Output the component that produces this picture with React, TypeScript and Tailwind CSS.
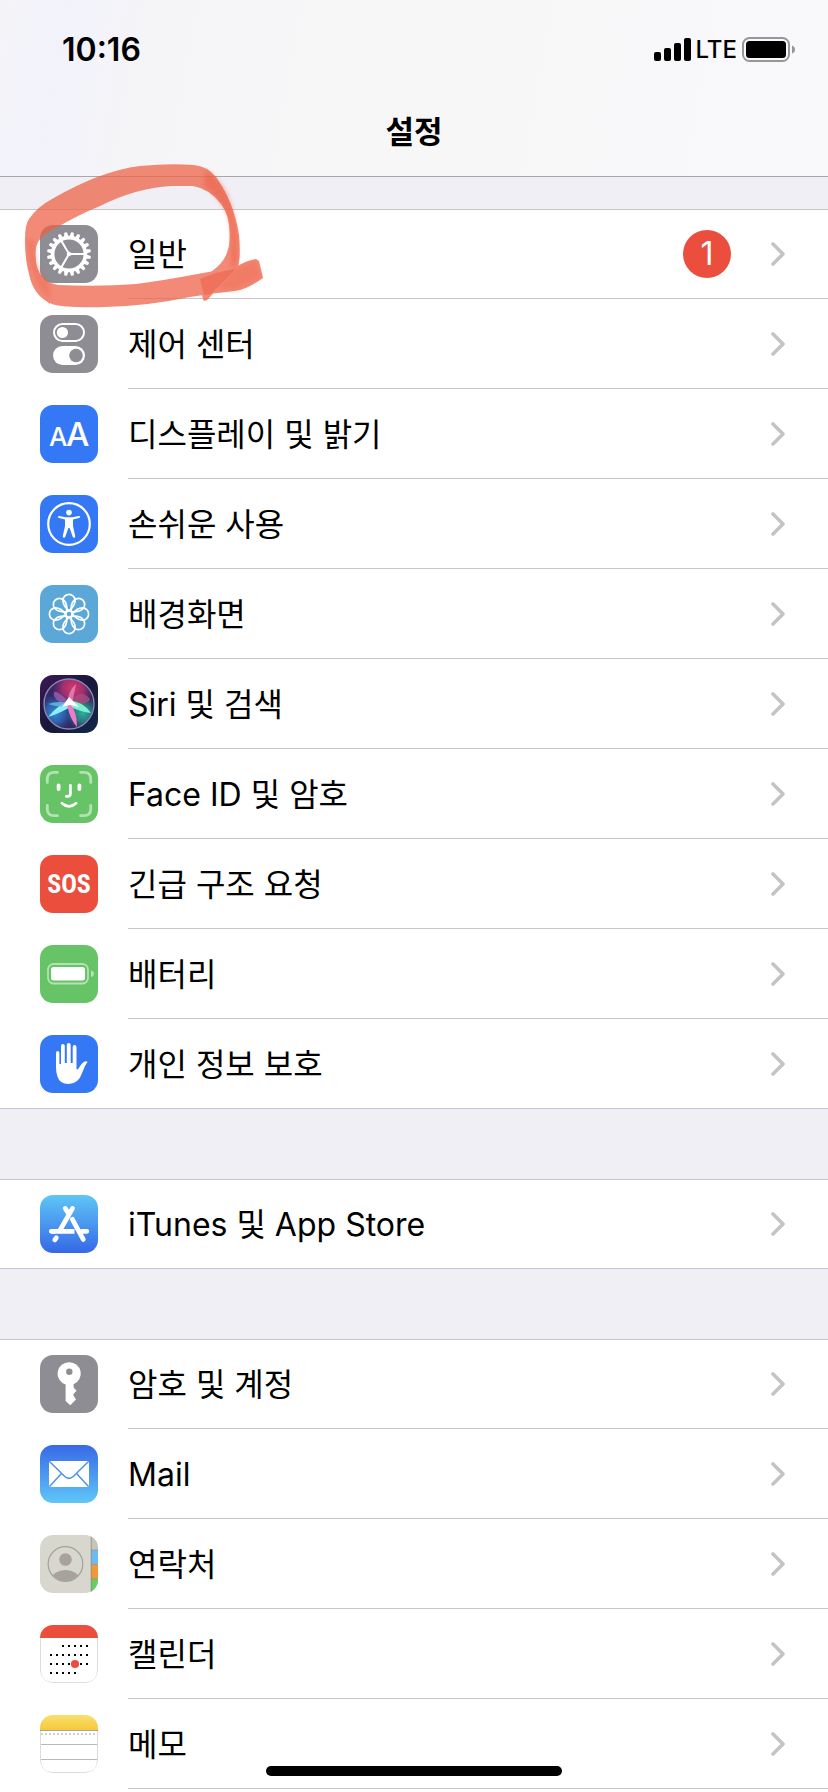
import type { ReactNode } from 'react'

const WHITE = '#ffffff'

function Tile({ fill, children }: { fill: string; children: ReactNode }) {
  return (
    <svg viewBox="0 0 58 58" className="h-[58px] w-[58px] shrink-0 rounded-[13px]" aria-hidden="true">
      <rect width="58" height="58" fill={fill} />
      {children}
    </svg>
  )
}

function GeneralIcon() {
  const teeth = Array.from({ length: 20 }, (_, i) => i * 18 + 9)
  return (
    <Tile fill="#8e8d93">
      {teeth.map((angle) => (
        <path key={angle} d="M26.8 12 L27.5 7.8 Q27.7 7 28.3 7 H29.7 Q30.3 7 30.5 7.8 L31.2 12 Z" fill={WHITE} transform={`rotate(${angle} 29 29)`} />
      ))}
      <circle cx="29" cy="29" r="16.4" fill="none" stroke={WHITE} strokeWidth="3.6" />
      <path d="M29 29 H44 M29 29 L21.5 16 M29 29 L21.5 42" stroke={WHITE} strokeWidth="2" />
      <circle cx="29" cy="29" r="2.2" fill={WHITE} />
    </Tile>
  )
}

function ControlCenterIcon() {
  return (
    <Tile fill="#8e8d93">
      <rect x="14" y="9" width="30" height="17" rx="8.5" fill="none" stroke={WHITE} strokeWidth="2" />
      <circle cx="22.4" cy="17.5" r="5.6" fill={WHITE} />
      <rect x="13" y="31" width="32" height="19" rx="9.5" fill={WHITE} />
      <circle cx="36" cy="40.5" r="6.8" fill="#8e8d93" />
    </Tile>
  )
}

function DisplayIcon() {
  return (
    <Tile fill="#3478f6">
      <text x="9" y="41" fontSize="26" fontWeight="500" fill={WHITE} className="font-['Inter',sans-serif]">A</text>
      <text x="26" y="41" fontSize="33" fontWeight="500" fill={WHITE} className="font-['Inter',sans-serif]">A</text>
    </Tile>
  )
}

function AccessibilityIcon() {
  return (
    <Tile fill="#3478f6">
      <circle cx="29" cy="29" r="20.8" fill="none" stroke={WHITE} strokeWidth="2.2" />
      <circle cx="29" cy="17.6" r="2.8" fill={WHITE} />
      <path
        d="M19 21 L26 22.2 H32 L39 21 Q40.4 21 40 22.3 Q39.8 22.8 39 23 L33 24.4 V31 L35.2 41 Q35.4 42.6 34.3 42.8 Q33.2 43 32.7 41.8 L29.6 33 H28.4 L25.3 41.8 Q24.8 43 23.7 42.8 Q22.6 42.6 22.8 41 L25 31 V24.4 L19 23 Q18 22.7 18 21.9 Q18.1 21 19 21 Z"
        fill={WHITE}
      />
    </Tile>
  )
}

function WallpaperIcon() {
  return (
    <Tile fill="#5aa7d8">
      {[0, 45, 90, 135, 180, 225, 270, 315].map((angle) => (
        <path
          key={angle}
          d="M29 25.6 C25.4 22.8 22.9 19 22.9 15.5 A6.1 6.1 0 0 1 35.1 15.5 C35.1 19 32.6 22.8 29 25.6 Z"
          fill="none"
          stroke={WHITE}
          strokeWidth="1.7"
          strokeLinejoin="round"
          transform={`rotate(${angle} 29 29)`}
        />
      ))}
      <circle cx="29" cy="29" r="3.2" fill="none" stroke={WHITE} strokeWidth="1.7" />
    </Tile>
  )
}

function SiriIcon() {
  return (
    <Tile fill="url(#siri-bg)">
      <defs>
        <linearGradient id="siri-bg" x1="0" y1="0" x2="1" y2="1">
          <stop offset="0" stopColor="#3f1656" />
          <stop offset="0.5" stopColor="#17183a" />
          <stop offset="1" stopColor="#12264a" />
        </linearGradient>
        <radialGradient id="siri-red" cx="0.5" cy="0.5" r="0.5">
          <stop offset="0" stopColor="#d8366c" />
          <stop offset="0.5" stopColor="#b83272" stopOpacity="0.8" />
          <stop offset="1" stopColor="#8e2a7c" stopOpacity="0" />
        </radialGradient>
        <radialGradient id="siri-blue" cx="0.5" cy="0.5" r="0.5">
          <stop offset="0" stopColor="#2f8fd8" />
          <stop offset="0.5" stopColor="#2c6cb8" stopOpacity="0.8" />
          <stop offset="1" stopColor="#263b8f" stopOpacity="0" />
        </radialGradient>
        <radialGradient id="siri-teal" cx="0.5" cy="0.5" r="0.5">
          <stop offset="0" stopColor="#2fb19a" />
          <stop offset="0.5" stopColor="#258f8c" stopOpacity="0.8" />
          <stop offset="1" stopColor="#1c7a80" stopOpacity="0" />
        </radialGradient>
        <filter id="siri-soft">
          <feGaussianBlur stdDeviation="0.6" />
        </filter>
        <clipPath id="siri-orb">
          <circle cx="29" cy="29" r="24.5" />
        </clipPath>
      </defs>
      <g clipPath="url(#siri-orb)">
        <circle cx="29" cy="29" r="25" fill="#352762" />
        <circle cx="33" cy="13" r="21" fill="url(#siri-red)" />
        <circle cx="15" cy="38" r="20" fill="url(#siri-blue)" />
        <circle cx="43" cy="38" r="17" fill="url(#siri-teal)" />
        <g filter="url(#siri-soft)">
          <path d="M30 28 Q12 10 14 21 Q18 29 30 30 Z" fill="#a865b8" opacity="0.7" />
          <path d="M29 28 Q40 12 50 24 Q48 30 29 30 Z" fill="#b04a7c" opacity="0.8" />
          <path d="M28 29 Q27 17 36 9 Q34 20 32 28 Z" fill="#e58bb8" opacity="0.8" />
          <path d="M29 26 Q20 28 8 42 Q21 38 32 31 Z" fill="#92ecff" />
          <path d="M29 29 Q20 25 8 29 Q19 33 29 31 Z" fill="#69bfe5" opacity="0.8" />
          <path d="M28 26 Q42 25 51 38 Q41 37 28 31 Z" fill="#7cefd0" />
          <path d="M30 28 Q37 37 37 52 Q30 44 27 30 Z" fill="#ef7cc8" />
          <path d="M22 32 L29 22 L39 32 L30 30 Z" fill={WHITE} />
        </g>
      </g>
      <circle cx="29" cy="29" r="25" fill="none" stroke="#8b87ae" strokeWidth="1.4" />
    </Tile>
  )
}

function FaceIdIcon() {
  return (
    <Tile fill="#67c466">
      <g fill="none" strokeLinecap="round">
        <path
          d="M7.3 17.5 V14 Q7.3 7.3 14 7.3 H17.5 M40.5 7.3 H44 Q50.7 7.3 50.7 14 V17.5 M50.7 40.5 V44 Q50.7 50.7 44 50.7 H40.5 M17.5 50.7 H14 Q7.3 50.7 7.3 44 V40.5"
          stroke="#b3e2b3"
          strokeWidth="2.8"
        />
        <path d="M18.6 20.5 V24 M39.4 20.5 V24" stroke={WHITE} strokeWidth="3.8" />
        <path d="M30.4 20.5 V28.5 Q30.4 31.4 27.3 31.4 H26.4" stroke={WHITE} strokeWidth="2.8" />
        <path d="M22 38.2 Q29 44.6 36 38.2" stroke={WHITE} strokeWidth="2.8" />
      </g>
    </Tile>
  )
}

function SosIcon() {
  return (
    <Tile fill="#eb4e3d">
      <text x="29" y="38" textAnchor="middle" fontSize="26" fontWeight="700" fill={WHITE} className="font-['Liberation_Sans_Narrow','Roboto_Condensed','Open_Sans_Condensed','DejaVu_Sans_Condensed',sans-serif]">
        SOS
      </text>
    </Tile>
  )
}

function BatteryIcon() {
  return (
    <Tile fill="#67c466">
      <rect x="8" y="19" width="40" height="19.5" rx="5.5" fill="none" stroke="#b3e2b3" strokeWidth="1.8" />
      <rect x="11" y="22" width="34" height="13.5" rx="2.5" fill={WHITE} />
      <path d="M51 25.5 Q54 26.3 54 28.8 Q54 31.2 51 32 Z" fill="#b3e2b3" />
    </Tile>
  )
}

function PrivacyIcon() {
  return (
    <Tile fill="#3478f6">
      <path
        d="M16 17.8 a1.7 1.7 0 0 1 3.4 0 V29 H21 V11 a1.9 1.9 0 0 1 3.8 0 V28 H26.8 V10 a1.9 1.9 0 0 1 3.9 0 V28 H32.7 V12 a1.9 1.9 0 0 1 3.8 0 V34 Q37.3 35.2 38.5 33.5 Q41 28.6 44 26.8 Q46.5 25.6 47.6 26.8 Q44.7 30.5 42.3 37.5 Q38.5 49 28.5 49 Q19.5 49 17.3 41 Q16 37 16 32 Z"
        fill={WHITE}
      />
    </Tile>
  )
}

function AppStoreIcon() {
  return (
    <Tile fill="url(#store-bg)">
      <defs>
        <linearGradient id="store-bg" x1="0" y1="0" x2="0" y2="1">
          <stop offset="0" stopColor="#5fc6f7" />
          <stop offset="1" stopColor="#3568e6" />
        </linearGradient>
      </defs>
      <g stroke={WHITE} strokeWidth="4.8" strokeLinecap="round">
        <path d="M11.3 36.3 H34.5" strokeLinecap="butt" />
        <path d="M11.3 36.3 H14 M42 36.3 H46.8 M32.5 13.4 L20 35.2 M25.3 13.4 L28.8 19 M32.4 24.3 L43.3 44.4 M16.3 42.8 L14.8 44.9" />
      </g>
    </Tile>
  )
}

function PasswordsIcon() {
  return (
    <Tile fill="#8e8d93">
      <path
        fillRule="evenodd"
        d="M29.3 7.2 A11.4 11.4 0 0 1 33.6 29.2 V32.5 L36.6 35.8 L33.4 39 V40.3 L36 44.6 L30.3 50.2 L25.6 46 V29.5 A11.4 11.4 0 0 1 29.3 7.2 Z M29.3 13.6 A3.2 3.2 0 1 0 29.3 20 A3.2 3.2 0 1 0 29.3 13.6 Z"
        fill={WHITE}
      />
    </Tile>
  )
}

function MailIcon() {
  return (
    <Tile fill="url(#mail-bg)">
      <defs>
        <linearGradient id="mail-bg" x1="0" y1="0" x2="0" y2="1">
          <stop offset="0" stopColor="#3869e6" />
          <stop offset="1" stopColor="#5fc6f8" />
        </linearGradient>
      </defs>
      <rect x="9" y="16" width="40" height="26" rx="1.5" fill={WHITE} />
      <path d="M9.5 16.5 L24.5 31.2 Q29 35.6 33.5 31.2 L48.5 16.5 M9.5 41.5 L21.5 28.5 M48.5 41.5 L36.5 28.5" fill="none" stroke="#4c93ee" strokeWidth="1.5" />
    </Tile>
  )
}

function ContactsIcon() {
  return (
    <Tile fill="#d7d7cd">
      <defs>
        <clipPath id="contact-disc">
          <circle cx="25.5" cy="29" r="17" />
        </clipPath>
      </defs>
      <rect x="51" y="0" width="7" height="15" fill="#c6c5bd" />
      <rect x="51" y="15" width="7" height="14.5" fill="#70baf3" />
      <rect x="51" y="29.5" width="7" height="14.5" fill="#f09a37" />
      <rect x="51" y="44" width="7" height="14" fill="#67ce67" />
      <path d="M51.2 0 V58" stroke="#8d8b80" strokeWidth="0.8" />
      <path d="M51 15 H58 M51 29.5 H58 M51 44 H58" stroke="#8d8b80" strokeWidth="0.6" />
      <g clipPath="url(#contact-disc)" fill="#a8a29d">
        <circle cx="25.5" cy="24.5" r="6.3" />
        <ellipse cx="25.5" cy="44.5" rx="14" ry="9.5" />
      </g>
      <circle cx="25.5" cy="29" r="17.3" fill="none" stroke="#a8a29d" strokeWidth="1.3" />
    </Tile>
  )
}

const CALENDAR_ROWS = [
  { y: 20, from: 2, to: 6 },
  { y: 29, from: 0, to: 6 },
  { y: 38, from: 0, to: 6 },
  { y: 47, from: 0, to: 4 },
]

function CalendarIcon() {
  return (
    <Tile fill={WHITE}>
      <rect width="58" height="13" fill="#eb4e3d" />
      {CALENDAR_ROWS.map(({ y, from, to }) =>
        Array.from({ length: to - from + 1 }, (_, i) => (
          <rect key={`${y}-${i}`} x={10 + (from + i) * 6} y={y} width="2" height="2" fill="#000000" />
        )),
      )}
      <circle cx="35" cy="39" r="4.1" fill="#eb4e3d" />
      <path d="M0.5 13 V45 Q0.5 57.5 13 57.5 H45 Q57.5 57.5 57.5 45 V13" fill="none" stroke="#dcdcdf" />
    </Tile>
  )
}

function NotesIcon() {
  return (
    <Tile fill={WHITE}>
      <defs>
        <linearGradient id="notes-bg" x1="0" y1="0" x2="0" y2="1">
          <stop offset="0" stopColor="#fadf6e" />
          <stop offset="1" stopColor="#f5c93b" />
        </linearGradient>
      </defs>
      <rect width="58" height="15" fill="url(#notes-bg)" />
      <path d="M0 15.5 H58" stroke="#a9a695" />
      <path d="M1 19 H58" stroke="#c4c4c4" strokeWidth="1.6" strokeDasharray="2 2" />
      <path d="M0 29.5 H58 M0 44.5 H58" stroke="#b9b9b9" />
      <path d="M0.5 16 V45 Q0.5 57.5 13 57.5 H45 Q57.5 57.5 57.5 45 V16" fill="none" stroke="#dcdcdf" />
    </Tile>
  )
}

function Chevron() {
  return (
    <svg viewBox="0 0 14 24" className="h-6 w-[14px] shrink-0" aria-hidden="true">
      <path d="M2 2 L12 12 L2 22" fill="none" stroke="#c4c4c6" strokeWidth="3.6" strokeLinecap="round" strokeLinejoin="round" />
    </svg>
  )
}

interface RowProps {
  icon: ReactNode
  label: string
  badge?: number
}

function Row({ icon, label, badge }: RowProps) {
  return (
    <a href="#" className="flex h-[90px] items-center gap-[30px] pl-10">
      {icon}
      <span className="flex h-full flex-1 items-center gap-10 border-b border-[#c6c6c8] pr-[43px]">
        <span className="flex-1 pt-[2px] text-[32px] leading-10">{label}</span>
        {badge !== undefined && (
          <span className="flex h-12 w-12 items-center justify-center rounded-full bg-[#eb4e3d] text-[32px] leading-10 text-white">
            {badge}
          </span>
        )}
        <Chevron />
      </span>
    </a>
  )
}

function StatusBar() {
  return (
    <div className="flex h-[86px] items-center justify-between pt-[14px] pr-8 pl-[62px]">
      <time className="text-[32px] leading-10 font-semibold">10:16</time>
      <div className="flex items-center gap-[5px]">
        <svg viewBox="0 0 37 24" className="h-6 w-[37px]" aria-hidden="true">
          <rect x="0" y="14" width="7" height="9" rx="2" />
          <rect x="10" y="10" width="7" height="13" rx="2" />
          <rect x="20" y="5" width="7" height="18" rx="2" />
          <rect x="30" y="0" width="7" height="23" rx="2" />
        </svg>
        <span className="text-[24px] leading-8 font-medium">LTE</span>
        <svg viewBox="0 0 54 26" className="h-[26px] w-[54px]" aria-hidden="true">
          <rect x="1" y="1" width="46" height="23" rx="6.5" fill="none" stroke="#97979a" strokeWidth="2" />
          <rect x="4" y="4" width="40" height="17" rx="3.5" />
          <path d="M50 8.5 Q53 9.5 53 12.5 Q53 15.5 50 16.5 Z" fill="#97979a" />
        </svg>
      </div>
    </div>
  )
}

/** Hand-drawn highlighter loop around the first row. */
function MarkerLoop() {
  return (
    <svg viewBox="0 0 250 150" className="pointer-events-none absolute top-[160px] left-5 h-[150px] w-[250px]" aria-hidden="true">
      <defs>
        <filter id="marker-edge">
          <feGaussianBlur stdDeviation="0.7" />
        </filter>
        <filter id="marker-soft">
          <feGaussianBlur stdDeviation="2" />
        </filter>
      </defs>
      <g fill="#ee6045" opacity="0.73" filter="url(#marker-edge)">
        <path d="M5 80 Q5 64 9 59 Q17 47 32 39 Q80 11 120 6 Q150 3 174 5 Q187 6 196 17 Q214 42 219 75 Q221 96 218 107 Q214 113 205 120 L190 137 Q184 144 183 139 Q179 126 180 121 Q188 114 196 108 Q206 100 209 86 Q212 58 201 44 Q190 29 173 26 H151 Q116 28 80 46 Q58 55 36 68 Q18 76 16 88 Q14 108 23 118 L30 124 V144 Q20 136 12 123 Q5 106 5 80 Z" />
        <path d="M18 110 Q22 122 38 125 Q80 127 116 124 Q146 120 172 115 Q198 110 214 108 Q227 100 236 99 L239 101 L243 118 Q226 130 215 131 Q194 133 170 137 Q128 146 85 147 Q44 148 32 144 Q15 137 10 118 Z" />
      </g>
      {/* heavier ink where the strokes bend and cross */}
      <g fill="#ec5335">
        <path opacity="0.4" filter="url(#marker-soft)" d="M185 10 Q198 17 206 31 Q218 56 218 98 Q216 106 211 108 V86 Q212 60 204 48 Q195 34 184 26 Z" />
        <path opacity="0.4" filter="url(#marker-edge)" d="M180 119 Q198 111 215 109 L205 120 L191 134 L184 135 Z" />
        <path opacity="0.25" filter="url(#marker-soft)" d="M214 109 L236 100 L242 118 L215 130 L196 130 Z" />
        <path opacity="0.25" filter="url(#marker-soft)" d="M6 80 L15 80 Q14 108 30 124 L30 140 Q10 124 6 80 Z" />
      </g>
    </svg>
  )
}

export default function App() {
  return (
    <div className="relative flex min-h-screen flex-col bg-[#f0eff5] font-['Inter','Noto_Sans_CJK_KR',sans-serif] text-black">
      <header className="border-b border-[#a7a7aa] bg-[linear-gradient(100deg,#f4f4f8_0%,#f2f2fc_8%,#f5f5f7_18%,#f7f7f8_50%,#f9f9fb_100%)]">
        <StatusBar />
        <h1 className="flex h-[90px] items-center justify-center pt-[2px] text-[31px] leading-10 font-bold">설정</h1>
      </header>

      <main className="flex flex-1 flex-col gap-[70px] pt-8">
        <section className="bg-white shadow-[inset_0_1px_0_#c6c6c8,inset_0_-1px_0_#c6c6c8]">
          <Row icon={<GeneralIcon />} label="일반" badge={1} />
          <Row icon={<ControlCenterIcon />} label="제어 센터" />
          <Row icon={<DisplayIcon />} label="디스플레이 및 밝기" />
          <Row icon={<AccessibilityIcon />} label="손쉬운 사용" />
          <Row icon={<WallpaperIcon />} label="배경화면" />
          <Row icon={<SiriIcon />} label="Siri 및 검색" />
          <Row icon={<FaceIdIcon />} label="Face ID 및 암호" />
          <Row icon={<SosIcon />} label="긴급 구조 요청" />
          <Row icon={<BatteryIcon />} label="배터리" />
          <Row icon={<PrivacyIcon />} label="개인 정보 보호" />
        </section>

        <section className="bg-white shadow-[inset_0_1px_0_#c6c6c8,inset_0_-1px_0_#c6c6c8]">
          <Row icon={<AppStoreIcon />} label="iTunes 및 App Store" />
        </section>

        <section className="flex-1 bg-white shadow-[inset_0_1px_0_#c6c6c8]">
          <Row icon={<PasswordsIcon />} label="암호 및 계정" />
          <Row icon={<MailIcon />} label="Mail" />
          <Row icon={<ContactsIcon />} label="연락처" />
          <Row icon={<CalendarIcon />} label="캘린더" />
          <Row icon={<NotesIcon />} label="메모" />
        </section>
      </main>

      <MarkerLoop />
      <div className="fixed bottom-4 left-1/2 h-[10px] w-[296px] -translate-x-1/2 rounded-full bg-black" />
    </div>
  )
}
